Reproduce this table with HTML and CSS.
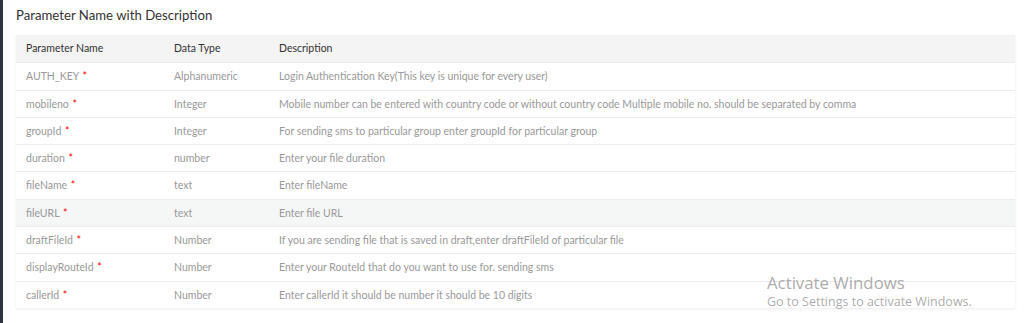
FILE: index.html
```html
<!DOCTYPE html>
<html lang="en">
<head>
    <meta charset="UTF-8">
    <title>Parameter Name with Description</title>
    <link rel="stylesheet" href="styles.css">
</head>
<body>
    <div class="sidebar"></div>
    <div class="content">
        <h4 class="title">Parameter Name with Description</h4>
        <table class="params">
            <thead>
                <tr>
                    <th class="col-name">Parameter Name</th>
                    <th class="col-type">Data Type</th>
                    <th>Description</th>
                </tr>
            </thead>
            <tbody>
                <tr>
                    <td>AUTH_KEY <span class="req">*</span></td>
                    <td>Alphanumeric</td>
                    <td>Login Authentication Key(This key is unique for every user)</td>
                </tr>
                <tr>
                    <td>mobileno <span class="req">*</span></td>
                    <td>Integer</td>
                    <td>Mobile number can be entered with country code or without country code Multiple mobile no. should be separated by comma</td>
                </tr>
                <tr>
                    <td>groupId <span class="req">*</span></td>
                    <td>Integer</td>
                    <td>For sending sms to particular group enter groupId for particular group</td>
                </tr>
                <tr>
                    <td>duration <span class="req">*</span></td>
                    <td>number</td>
                    <td>Enter your file duration</td>
                </tr>
                <tr>
                    <td>fileName <span class="req">*</span></td>
                    <td>text</td>
                    <td>Enter fileName</td>
                </tr>
                <tr class="hover">
                    <td>fileURL <span class="req">*</span></td>
                    <td>text</td>
                    <td>Enter file URL</td>
                </tr>
                <tr>
                    <td>draftFileId <span class="req">*</span></td>
                    <td>Number</td>
                    <td>If you are sending file that is saved in draft,enter draftFileId of particular file</td>
                </tr>
                <tr>
                    <td>displayRouteId <span class="req">*</span></td>
                    <td>Number</td>
                    <td>Enter your RouteId that do you want to use for. sending sms</td>
                </tr>
                <tr>
                    <td>callerId <span class="req">*</span></td>
                    <td>Number</td>
                    <td>Enter callerId it should be number it should be 10 digits</td>
                </tr>
            </tbody>
        </table>
    </div>
    <div class="watermark">
        <div class="wm-title">Activate Windows</div>
        <div class="wm-sub">Go to Settings to activate Windows.</div>
    </div>
</body>
</html>
```

FILE: styles.css
```css
body {
    margin: 0;
    display: flex;
    height: 323px;
    overflow: hidden;
    background-color: #fff;
    font-family: 'Lato', 'Liberation Sans', sans-serif;
}

.sidebar {
    width: 3px;
    background-color: #2d3440;
    flex-shrink: 0;
}

.content {
    flex: 1;
    padding: 7px 9px 0 13px;
}

.title {
    margin: 0 0 11px;
    font-size: 13.2px;
    font-weight: 400;
    color: #333;
    line-height: 17px;
}

.params {
    width: 100%;
    border-collapse: collapse;
    font-size: 10.5px;
    box-shadow: 0 1px 3px rgba(0, 0, 0, 0.08);
}

.params th,
.params td {
    text-align: left;
    padding: 7px 10px 6px;
    line-height: 13.3px;
    border-bottom: 1px solid #ececec;
    white-space: nowrap;
}

.params th {
    font-weight: 400;
    color: #333;
    background-color: #f4f4f4;
    padding-top: 7px;
    padding-bottom: 7px;
}

.params td {
    color: #999;
}

.params tbody tr:last-child td {
    border-bottom: none;
}

.params .col-name {
    width: 128px;
}

.params .col-type {
    width: 85px;
}

.params tr.hover td {
    background-color: #f5f6f6;
}

.req {
    color: #f00;
    margin-left: 1px;
}

.watermark {
    position: absolute;
    left: 767px;
    top: 272px;
    font-family: 'Open Sans', 'Liberation Sans', sans-serif;
    color: rgba(150, 150, 150, 0.8);
}

.wm-title {
    font-size: 16.8px;
    line-height: 21px;
}

.wm-sub {
    font-size: 12.5px;
    line-height: 18px;
}
```
